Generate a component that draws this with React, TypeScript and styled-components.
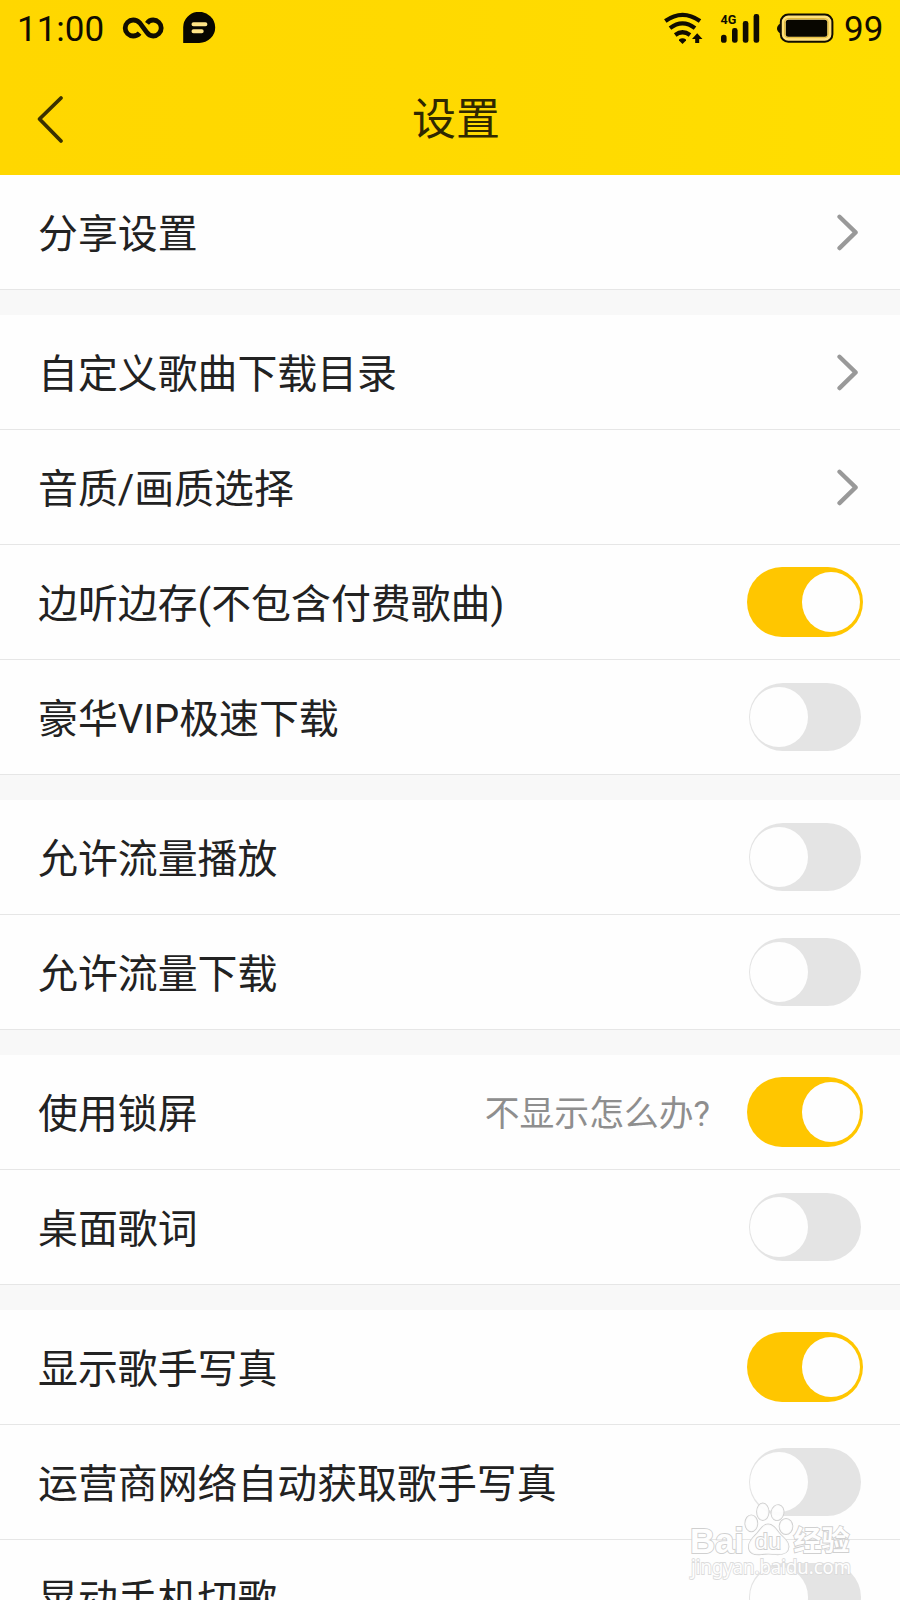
import React, { useState } from 'react';
import styled, { createGlobalStyle } from 'styled-components';

const GlobalStyle = createGlobalStyle`
  * { box-sizing: border-box; }
  html, body { margin: 0; padding: 0; background: #fefefe; }
  body { font-family: Roboto, "Noto Sans CJK SC", sans-serif; overflow: hidden; }
`;

const Screen = styled.div`
  position: relative;
  width: 900px;
  height: 1600px;
  overflow: hidden;
  background: #f8f8f8;
  color: #222;
`;

const Header = styled.header`
  height: 175px;
  background: linear-gradient(90deg, #ffd700 0%, #ffd900 45%, #ffde00 100%);
`;

const StatusBar = styled.div`
  display: flex;
  align-items: center;
  justify-content: space-between;
  height: 56px;
  padding: 0 18px 0 17px;
  color: #110d00;
`;

const StatusGroup = styled.div<{ $gap: number }>`
  display: flex;
  align-items: center;
  gap: ${({ $gap }) => $gap}px;
`;

const StatusText = styled.span<{ $width: number }>`
  width: ${({ $width }) => $width}px;
  padding-top: 3px;
  font-size: 35px;
  line-height: 53px;
  white-space: nowrap;
`;

const TitleBar = styled.div`
  display: grid;
  grid-template-columns: 120px 1fr 108px;
  align-items: center;
  height: 119px;
`;

const BackButton = styled.button`
  display: flex;
  margin: 7px 0 0 34px;
  padding: 0;
  border: 0;
  background: none;
`;

const Title = styled.h1`
  margin: 9px 0 0;
  font-size: 44px;
  line-height: 60px;
  font-weight: 400;
  text-align: center;
  color: #2f2800;
`;

const Group = styled.section`
  margin-bottom: 25px;
  background: #fefefe;
`;

const Row = styled.div`
  display: flex;
  align-items: center;
  height: 115px;
  padding: 0 37px 0 38px;
  border-bottom: 1px solid #e6e6e6;
`;

const Label = styled.span`
  flex: 1;
  padding-top: 6px;
  font-size: 39.9px;
  line-height: 60px;
  white-space: nowrap;
`;

const Hint = styled.span`
  margin-right: 37px;
  padding-top: 4px;
  font-size: 34.8px;
  line-height: 50px;
  color: #8e8e8e;
`;

const ArrowIcon = styled.svg`
  margin-right: 3px;
`;

const Track = styled.button<{ $on: boolean }>`
  display: flex;
  align-items: center;
  justify-content: ${({ $on }) => ($on ? 'flex-end' : 'flex-start')};
  width: ${({ $on }) => ($on ? 116 : 112)}px;
  height: ${({ $on }) => ($on ? 70 : 68)}px;
  margin-right: ${({ $on }) => ($on ? 0 : 2)}px;
  padding: 0 ${({ $on }) => ($on ? 3 : 1)}px;
  border: 0;
  border-radius: 36px;
  background: ${({ $on }) => ($on ? '#ffc600' : '#e4e4e4')};
`;

const Knob = styled.span`
  width: 58px;
  height: 60px;
  border-radius: 50%;
  background: #fefefe;
`;

const Watermark = styled.svg`
  position: absolute;
  left: 684px;
  top: 1496px;
  pointer-events: none;
  paint-order: stroke;
`;

const InfinityIcon = () => (
  <svg width="42" height="24" viewBox="122 16 42 24" fill="none" stroke="#110d00" strokeWidth="4.8">
    <path d="M139.6 33.1C137.8 35.2 135.6 36 133.2 36A8 8 0 0 1 133.2 20C136 20 138 21 140 23.2L146.6 32.2C148.4 34.8 150.6 36 153.2 36A8 8 0 0 0 153.2 20C150.6 20 148.6 21 147 23.3" />
  </svg>
);

const ChatIcon = () => (
  <svg width="34" height="32" viewBox="-1.2 0 34 32">
    <path d="M0 31V16A16 15.6 0 1 1 16 31Z" fill="#080600" />
    <path d="M10.3 12.3H22.2M10.3 19.3H18.5" stroke="#ffe486" strokeWidth="4" strokeLinecap="round" />
  </svg>
);

const WifiIcon = () => (
  <svg width="40" height="32" viewBox="663 11 40 32" fill="none" stroke="#110d00" strokeWidth="4.2">
    <path d="M665.3 20Q682.5 7.7 700 20M670 27.2Q682.5 17.6 695 27.2M675.2 34Q682.5 28.5 690 34" />
    <path d="M679 38.4Q682.5 35.9 686 38.4V39.5L682.5 43L679 39.5Z" fill="#110d00" stroke="none" />
    <path d="M697.2 32.2L702.5 38H699.2V42H695.2V38H692Z" fill="#110d00" stroke="none" />
  </svg>
);

const SignalIcon = () => (
  <svg width="40" height="31" viewBox="720 12 40 31" fill="#110d00" overflow="visible">
    <rect x="721" y="33.8" width="5.6" height="8" rx="2.6" />
    <rect x="732" y="27" width="5.6" height="14.8" rx="2.4" />
    <rect x="742.8" y="20" width="5.6" height="21.8" rx="2.4" />
    <rect x="753.6" y="13" width="5.6" height="28.8" rx="2.4" />
    <text x="720.6" y="23" fontFamily="Roboto" fontSize="13.5" fontWeight="700" textLength="15.8" lengthAdjust="spacingAndGlyphs">4G</text>
  </svg>
);

const BatteryIcon = () => (
  <svg width="57" height="30" viewBox="777 12.5 57 30">
    <path d="M780.5 23Q777 25 777 28Q777 31 780.5 33Z" fill="#110d00" />
    <rect x="780.8" y="14" width="51.6" height="27.2" rx="7.5" fill="#ffe17a" stroke="#110d00" strokeWidth="2" />
    <rect x="784.6" y="18" width="43.6" height="19.2" rx="3.5" fill="none" stroke="#e0b83a" strokeWidth="1" />
    <rect x="785.8" y="19.2" width="41.4" height="17" rx="2.5" fill="#080600" />
  </svg>
);

const Arrow = () => (
  <ArrowIcon width="24" height="38" viewBox="0 0 24 38" fill="none" stroke="#999" strokeWidth="4.3" strokeLinecap="round" strokeLinejoin="round">
    <path d="M3.5 3.8L19.6 19.4L3.5 35.1" />
  </ArrowIcon>
);

const Toggle = ({ initial, label }: { initial: boolean; label: string }) => {
  const [on, setOn] = useState(initial);
  return (
    <Track type="button" role="switch" aria-checked={on} aria-label={label} $on={on} onClick={() => setOn(!on)}>
      <Knob />
    </Track>
  );
};

type Item = { label: string; hint?: string; on?: boolean };

const groups: Item[][] = [
  [{ label: '分享设置' }],
  [
    { label: '自定义歌曲下载目录' },
    { label: '音质/画质选择' },
    { label: '边听边存(不包含付费歌曲)', on: true },
    { label: '豪华VIP极速下载', on: false },
  ],
  [
    { label: '允许流量播放', on: false },
    { label: '允许流量下载', on: false },
  ],
  [
    { label: '使用锁屏', hint: '不显示怎么办?', on: true },
    { label: '桌面歌词', on: false },
  ],
  [
    { label: '显示歌手写真', on: true },
    { label: '运营商网络自动获取歌手写真', on: false },
    { label: '晃动手机切歌', on: false },
  ],
];

const BaiduMark = () => (
  <Watermark width="176" height="92" viewBox="684 1496 176 92" fill="#fefefe" stroke="#d0d0d0" strokeWidth="1.8">
    <g fontFamily="'Liberation Sans', sans-serif" fontWeight="700">
      <text x="690" y="1553" fontSize="35" textLength="54" lengthAdjust="spacingAndGlyphs">Bai</text>
      <text x="793.5" y="1551" fontSize="28" fontFamily="'Noto Sans CJK SC', sans-serif" textLength="56" lengthAdjust="spacingAndGlyphs">经验</text>
    </g>
    <g strokeWidth="1.8" fillOpacity="0.9">
      <ellipse cx="751.3" cy="1523.3" rx="6" ry="8" />
      <ellipse cx="762.8" cy="1511.8" rx="5.8" ry="8.3" />
      <ellipse cx="777.5" cy="1512.6" rx="6" ry="7.6" transform="rotate(12 777.5 1512.6)" />
      <ellipse cx="786" cy="1526.5" rx="6.4" ry="7.6" />
      <path d="M768 1524.5C773 1524.5 776 1529 779 1533C783 1538 789 1541 788.5 1547C788 1554 782 1554.5 776 1554.2C771 1553.5 766 1553.5 761 1554.2C754 1555 749 1553 748.8 1547C748.7 1541 754 1537 757.5 1533C761 1529 763 1524.5 768 1524.5Z" />
    </g>
    <text x="755" y="1549.3" fontFamily="'Liberation Sans', sans-serif" fontSize="22" textLength="26" lengthAdjust="spacingAndGlyphs">du</text>
    <text x="691" y="1574" fontFamily="'Noto Sans', sans-serif" fontSize="19.5" stroke="#dcdcdc" textLength="160" lengthAdjust="spacingAndGlyphs">jingyan.baidu.com</text>
  </Watermark>
);

export default function App() {
  return (
    <>
      <GlobalStyle />
      <Screen>
        <Header>
          <StatusBar>
            <StatusGroup $gap={18}>
              <StatusText $width={87}>11:00</StatusText>
              <InfinityIcon />
              <ChatIcon />
            </StatusGroup>
            <StatusGroup $gap={17}>
              <WifiIcon />
              <SignalIcon />
              <StatusGroup $gap={10}>
                <BatteryIcon />
                <StatusText $width={38}>99</StatusText>
              </StatusGroup>
            </StatusGroup>
          </StatusBar>
          <TitleBar>
            <BackButton type="button" aria-label="返回">
              <svg width="32" height="50" viewBox="34 94 32 50" fill="none" stroke="#3a3100" strokeWidth="3.8" strokeLinecap="round" strokeLinejoin="round">
                <path d="M61 98L39.5 119L61 141" />
              </svg>
            </BackButton>
            <Title>设置</Title>
          </TitleBar>
        </Header>
        {groups.map((items) => (
          <Group key={items[0].label}>
            {items.map(({ label, hint, on }) => (
              <Row key={label}>
                <Label>{label}</Label>
                {hint && <Hint>{hint}</Hint>}
                {on === undefined ? <Arrow /> : <Toggle initial={on} label={label} />}
              </Row>
            ))}
          </Group>
        ))}
        <BaiduMark />
      </Screen>
    </>
  );
}
